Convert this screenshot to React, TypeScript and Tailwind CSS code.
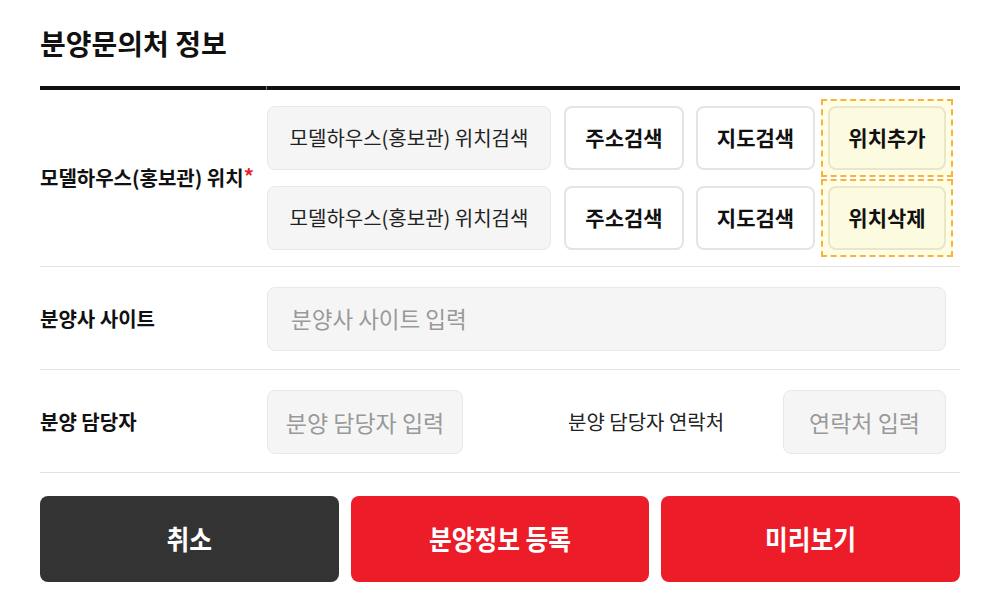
import React from "react";

const font = { fontFamily: '"Noto Sans CJK KR", "Noto Sans", sans-serif' };

function GrayBox({ children, className = "" }: { children: React.ReactNode; className?: string }) {
  return (
    <div
      className={`h-[64px] shrink-0 flex items-center justify-center rounded-[8px] border border-[#e8e8e8] bg-[#f5f5f5] whitespace-nowrap ${className}`}
    >
      {children}
    </div>
  );
}

function WhiteBtn({ children, className = "" }: { children: React.ReactNode; className?: string }) {
  return (
    <button
      className={`h-[64px] shrink-0 flex items-center justify-center rounded-[8px] border-2 border-[#e4e4e4] bg-white text-[21px] font-bold text-[#111] ${className}`}
    >
      {children}
    </button>
  );
}

function HiBtn({ children }: { children: React.ReactNode }) {
  return (
    <div className="relative ml-[13px] w-[118px] h-[64px] shrink-0">
      <div className="absolute -inset-[7px] border-2 border-dashed border-[#f8b33c] bg-[#fffde4]" />
      <button className="relative w-full h-full flex items-center justify-center rounded-[8px] border-2 border-[#e9e6c9] bg-[#fdfbdf] text-[21px] font-bold text-[#111]">
        {children}
      </button>
    </div>
  );
}

function LocRow({ action }: { action: string }) {
  return (
    <div className="flex items-center">
      <GrayBox className="w-[284px] text-[20px] text-[#222]">모델하우스(홍보관) 위치검색</GrayBox>
      <WhiteBtn className="ml-[13px] w-[120px]">주소검색</WhiteBtn>
      <WhiteBtn className="ml-[12px] w-[119px]">지도검색</WhiteBtn>
      <HiBtn>{action}</HiBtn>
    </div>
  );
}

export default function App() {
  return (
    <div className="w-[1000px] h-[600px] bg-white px-[40px] text-[#111]" style={font}>
      <div className="h-[86px] flex items-center">
        <h1 className="text-[28px] font-bold text-[#111]">분양문의처 정보</h1>
      </div>
      <div className="flex h-[4px] gap-px bg-[#777]">
        <div className="w-[226px] bg-[#111]" />
        <div className="flex-1 bg-[#111]" />
      </div>

      {/* Row 1 */}
      <div className="flex border-b border-[#e2e2e2]">
        <div className="w-[227px] shrink-0 flex items-center text-[20px] font-bold whitespace-nowrap">
          모델하우스(홍보관) 위치<span className="text-[#e8202a] relative -top-[2px]">*</span>
        </div>
        <div className="flex flex-col gap-[16px] py-[16px]">
          <LocRow action="위치추가" />
          <LocRow action="위치삭제" />
        </div>
      </div>

      {/* Row 2 */}
      <div className="flex border-b border-[#e2e2e2] pt-[20px] pb-[18px]">
        <div className="w-[227px] shrink-0 flex items-center text-[20px] font-bold">분양사 사이트</div>
        <GrayBox className="w-[679px] !justify-start pl-[23px] text-[22.5px] text-[#999]">분양사 사이트 입력</GrayBox>
      </div>

      {/* Row 3 */}
      <div className="flex items-center border-b border-[#e2e2e2] pt-[20px] pb-[18px]">
        <div className="w-[227px] shrink-0 flex items-center text-[20px] font-bold">분양 담당자</div>
        <GrayBox className="w-[196px] text-[23px] text-[#999]">분양 담당자 입력</GrayBox>
        <div className="ml-[105px] w-[215px] shrink-0 text-[20px] text-[#222] whitespace-nowrap">분양 담당자 연락처</div>
        <GrayBox className="w-[163px] text-[23px] text-[#999]">연락처 입력</GrayBox>
      </div>

      {/* Buttons */}
      <div className="mt-[23px] flex gap-[12px]">
        <button className="flex-1 h-[86px] rounded-[8px] bg-[#333333] text-white flex items-center justify-center">
          <span className="text-[27.5px] font-bold scale-x-90 inline-block whitespace-nowrap">취소</span>
        </button>
        <button className="flex-1 h-[86px] rounded-[8px] bg-[#ec1c29] text-white flex items-center justify-center">
          <span className="text-[27.5px] font-bold scale-x-90 inline-block whitespace-nowrap">분양정보 등록</span>
        </button>
        <button className="flex-1 h-[86px] rounded-[8px] bg-[#ec1c29] text-white flex items-center justify-center">
          <span className="text-[27.5px] font-bold scale-x-90 inline-block whitespace-nowrap">미리보기</span>
        </button>
      </div>
    </div>
  );
}
